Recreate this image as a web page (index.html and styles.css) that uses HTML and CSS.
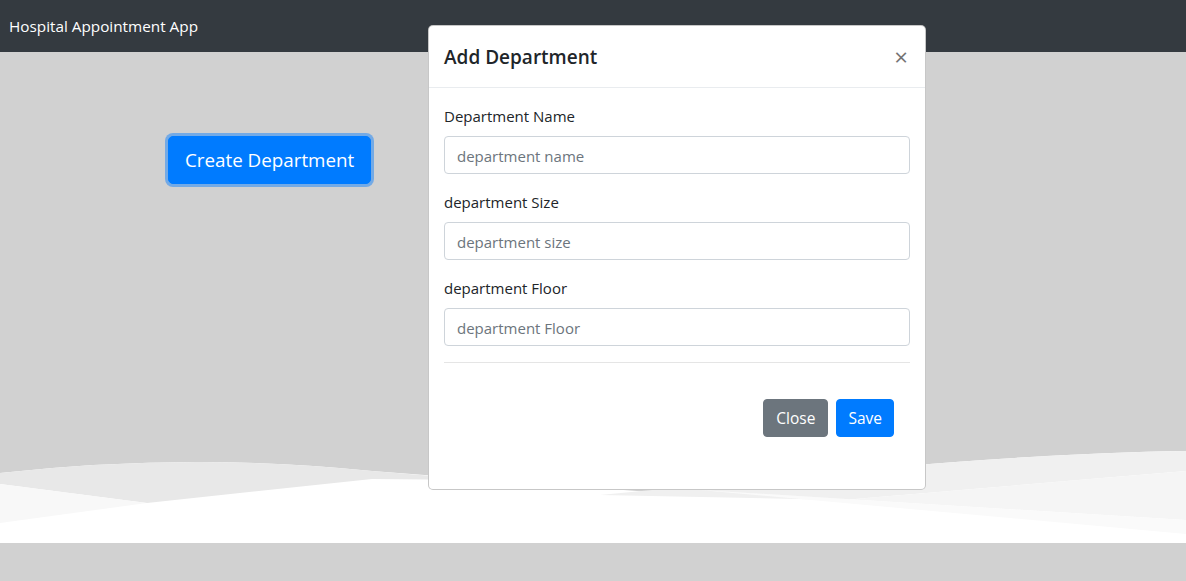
FILE: index.html
```html
<!DOCTYPE html>
<html lang="en">
<head>
<meta charset="utf-8">
<title>Hospital Appointment App</title>
<link rel="stylesheet" href="styles.css">
</head>
<body>
<nav class="navbar"><span class="brand">Hospital Appointment App</span></nav>
<main class="hero">
  <div class="hero-content">
    <button class="btn btn-lg btn-primary focused" type="button">Create Department</button>
  </div>
  <svg class="wave" viewBox="0 0 1186 93" preserveAspectRatio="none" xmlns="http://www.w3.org/2000/svg">
    <path d="M0,0 H1186 V1 C1100,2 1000,8 890,17 L650,42 L372,21 Q190,2 0,23 Z" fill="#d1d1d1"/>
    <path d="M0,23 Q190,2 372,21 L480,30 L372,29 L147,53 L0,34 Z" fill="#e8e8e8"/>
    <path d="M0,34 L147,53 L0,73 Z" fill="#f8f8f8"/>
    <path d="M600,45 L890,17 C1000,8 1100,2 1186,1 V21 L843,50 Z" fill="#f0f0f0"/>
    <path d="M700,40 L843,50 L1186,21 V70 Z" fill="#f5f5f5"/>
    <path d="M700,40 L1186,70 V84 Z" fill="#fafafa"/>
  </svg>
</main>

<div class="modal">
  <div class="modal-header">
    <h5 class="modal-title">Add Department</h5>
    <span class="close">&times;</span>
  </div>
  <div class="modal-body">
    <div class="form-group">
      <label class="label">Department Name</label>
      <input class="form-control" type="text" placeholder="department name">
    </div>
    <div class="form-group">
      <label class="label">department Size</label>
      <input class="form-control" type="text" placeholder="department size">
    </div>
    <div class="form-group">
      <label class="label">department Floor</label>
      <input class="form-control" type="text" placeholder="department Floor">
    </div>
    <hr class="divider">
    <div class="modal-footer">
      <button class="btn btn-secondary" type="button">Close</button>
      <button class="btn btn-primary" type="button">Save</button>
    </div>
  </div>
</div>
</body>
</html>
```
FILE: styles.css
```css
* { box-sizing: border-box; }
html, body { margin: 0; padding: 0; }
body {
  background: #d1d1d1;
  font-family: "Open Sans", "Noto Sans", sans-serif;
  color: #212529;
  font-size: 16px;
  line-height: 1.5;
  height: 581px;
  overflow: hidden;
}
.navbar {
  background: #343a40;
  height: 52px;
  display: flex;
  align-items: center;
  padding: 0 9px;
}
.brand {
  color: #fff;
  font-size: 15.3px;
  line-height: 1.5;
}
.hero {
  height: 491px;
  display: flex;
  flex-direction: column;
  justify-content: space-between;
}
.hero-content {
  padding: 84px 0 0 168px;
}
.wave {
  display: block;
  width: 100%;
  height: 93px;
  background: #fff;
}
.btn {
  font-family: inherit;
  display: inline-block;
  border: 1px solid transparent;
  border-radius: 4px;
  padding: 6px 11px;
  font-size: 15.5px;
  line-height: 24px;
  color: #fff;
  cursor: pointer;
}
.btn-lg {
  padding: 8px 16px;
  font-size: 18.8px;
  line-height: 30px;
  border-radius: 5px;
}
.btn-primary { background: #007bff; border-color: #007bff; }
.btn-secondary { background: #6c757d; border-color: #6c757d; }
.btn-secondary { padding-left: 12px; padding-right: 12px; }
.focused { box-shadow: 0 0 0 3px rgba(0, 123, 255, .45); }

.modal {
  position: absolute;
  left: 428px;
  top: 25px;
  width: 498px;
  height: 465px;
  background: #fff;
  border: 1px solid rgba(0, 0, 0, .22);
  border-radius: 5px;
}
.modal-header {
  display: flex;
  align-items: center;
  justify-content: space-between;
  padding: 16px 17px 15px 15px;
  border-bottom: 1px solid #e9ecef;
}
.modal-title {
  margin: 0;
  font-size: 19px;
  font-weight: 600;
  line-height: 30px;
}
.close {
  font-size: 24px;
  font-weight: 400;
  line-height: 1;
  color: #000;
  opacity: .55;
}
.modal-body { padding: 16px 15px 16px 15px; }
.form-group { margin-bottom: 16px; }
.label {
  display: block;
  margin-bottom: 8px;
  font-size: 15px;
  line-height: 24px;
}
.form-control {
  display: block;
  width: 100%;
  height: 38px;
  padding: 7px 12px 5px;
  font-family: inherit;
  font-size: 15px;
  color: #495057;
  background: #fff;
  border: 1px solid #ced4da;
  border-radius: 4px;
}
.form-control::placeholder { color: #6c757d; }
.divider {
  margin: 16px 0;
  border: 0;
  border-top: 1px solid rgba(0, 0, 0, .1);
}
.modal-footer {
  display: flex;
  justify-content: flex-end;
  gap: 8px;
  padding: 20px 16px 0 0;
}
```
